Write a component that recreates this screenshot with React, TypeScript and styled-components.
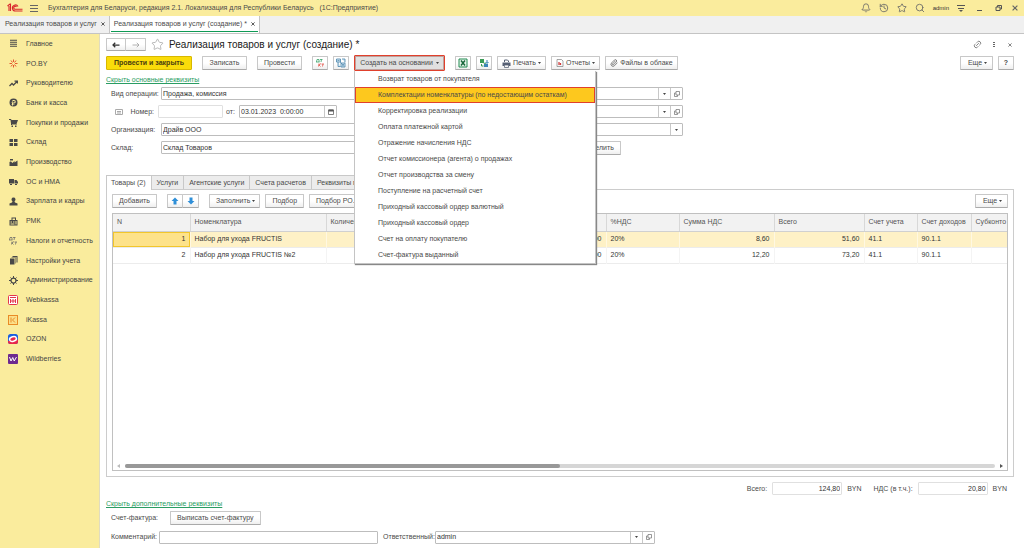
import React from "react";
import styled, { createGlobalStyle, css } from "styled-components";
import { Bell, History, Link2, Paperclip, Search, Star } from "lucide-react";

const GlobalStyle = createGlobalStyle`
  * { box-sizing: border-box; }
  body {
    margin: 0;
    background: #fff;
    color: #4a4a4a;
    font: 7px/10px "Liberation Sans", Arial, sans-serif;
  }
  button, input { font: inherit; color: inherit; margin: 0; }
  svg { display: block; flex: none; }
`;

/* ---------- shell ---------- */

const Shell = styled.div`
  display: flex;
  flex-direction: column;
  min-height: 100vh;
`;

const TitleBar = styled.header`
  display: flex;
  align-items: center;
  height: 16px;
  padding: 0 5px 0 7px;
  background: #faec9d;
`;

const AppTitle = styled.span`
  margin-left: 5px;
  white-space: pre;
`;

const Spacer = styled.div`
  flex: 1;
`;

const SystemTools = styled.div`
  display: flex;
  align-items: center;
  gap: 8px;
`;

const UserName = styled.span`
  font-size: 6px;
  color: #333;
`;

const IconButton = styled.button`
  display: flex;
  align-items: center;
  justify-content: center;
  min-width: 8px;
  padding: 0;
  border: 0;
  background: none;
  color: #666;
`;

const TabClose = styled(IconButton)`
  min-width: 4px;
  color: #333;
`;

const WindowTabs = styled.nav`
  display: flex;
  height: 18px;
  background: #f0f0f0;
  border-bottom: 1px solid #c4c4c4;
`;

const WindowTab = styled.div<{ $active?: boolean }>`
  display: flex;
  padding: 0 4px 0 5px;
  border-right: 1px solid #c4c4c4;
  ${(p) =>
    p.$active &&
    css`
      padding: 0 1px;
      background: #fff;
    `}
`;

const TabInner = styled.div<{ $active?: boolean }>`
  display: flex;
  align-items: center;
  gap: 4px;
  height: 16px;
  padding: ${(p) => (p.$active ? "0 3px" : "0")};
  border-bottom: 1px solid ${(p) => (p.$active ? "#0f9a55" : "transparent")};
`;

const TabLink = styled.a`
  color: inherit;
  text-decoration: none;
`;

const Body = styled.div`
  display: flex;
  flex: 1;
`;

const Sidebar = styled.nav`
  flex: none;
  width: 100px;
  background: #faec9d;
  border-right: 1px solid #e0dcc0;
`;

const SideList = styled.ul`
  display: flex;
  flex-direction: column;
  height: 335px;
  margin: 0;
  padding: 0;
  list-style: none;
`;

const SideItem = styled.li`
  display: flex;
  flex: 1;
  align-items: center;
`;

const SideLink = styled.a`
  display: grid;
  grid-template-columns: 10px auto;
  column-gap: 8px;
  align-items: center;
  justify-items: center;
  padding-left: 8px;
  color: #444;
  text-decoration: none;
  white-space: nowrap;
`;

const Main = styled.main`
  flex: 1;
  min-width: 0;
  padding: 4px 10px 4px 6px;
`;

/* ---------- shared controls ---------- */

const Button = styled.button<{ $square?: boolean }>`
  display: flex;
  align-items: center;
  justify-content: center;
  gap: 4px;
  height: 14px;
  padding: 0 ${(p) => (p.$square ? 0 : 6)}px;
  width: ${(p) => (p.$square ? "16px" : "auto")};
  border: 1px solid #c8c8c8;
  border-bottom-color: #aaa;
  border-radius: 1px;
  background: linear-gradient(#fff 50%, #efefef);
  color: #4a4a4a;
  white-space: nowrap;
`;

const WideButton = styled(Button)`
  min-width: 45px;
`;

const MenuButton = styled(Button)`
  gap: 2px;
  min-width: 33px;
  padding: 0 4px 0 6px;
`;

const IconTextButton = styled(Button)`
  gap: 2px;
  padding: 0 4px;
`;

const PrimaryButton = styled(Button)`
  width: 86px;
  border: 1px solid #d8b800;
  background: #fadc0a;
  font-weight: bold;
  color: #4a4010;
`;

const OpenButton = styled(Button)`
  width: 91px;
  height: 16px;
  gap: 3px;
  border: 1px solid #e0402c;
  background: #e0e0e0;
  box-shadow: inset 0 0 0 1px #c0a09c;
`;

const ButtonGroup = styled.div`
  display: flex;
  button + button { border-left: 0; border-radius: 0 1px 1px 0; }
`;

const NavButton = styled(Button)`
  width: 20px;
  height: 13px;
  padding: 0;
`;

const ToggleLink = styled.a`
  align-self: flex-start;
  color: #2a9d63;
  text-decoration: underline;
`;

const Label = styled.label<{ $width?: number; $right?: boolean }>`
  flex: none;
  width: ${(p) => (p.$width ? p.$width + "px" : "auto")};
  text-align: ${(p) => (p.$right ? "right" : "left")};
  padding-right: ${(p) => (p.$right ? 4 : 0)}px;
`;

const FieldBox = styled.div<{ $width?: number; $pale?: boolean }>`
  display: flex;
  flex: none;
  width: ${(p) => p.$width ?? 100}px;
  height: 13px;
  border: 1px solid ${(p) => (p.$pale ? "#e0e0e0" : "#bdbdbd")};
  border-radius: 1px;
  background: #fff;
`;

const FieldInput = styled.input<{ $right?: boolean }>`
  flex: 1;
  min-width: 0;
  padding: 0 1px;
  border: 0;
  outline: 0;
  background: none;
  color: #333;
  text-align: ${(p) => (p.$right ? "right" : "left")};
`;

const FieldButton = styled.button`
  display: flex;
  align-items: center;
  justify-content: center;
  width: 12px;
  padding: 0;
  border: 0;
  border-left: 1px solid #c8c8c8;
  background: none;
  color: #555;
`;

/* ---------- document header ---------- */

const DocHeader = styled.div`
  display: flex;
  align-items: center;
  height: 13px;
`;

const DocTitle = styled.h1`
  margin: 0 0 0 5px;
  font-size: 10px;
  line-height: 13px;
  font-weight: normal;
  color: #1a1a1a;
`;

const StarSlot = styled(IconButton)`
  margin-left: 5px;
  color: #aaa;
`;

const HeaderTools = styled.div`
  display: flex;
  align-items: center;
  gap: 8px;
`;

const Toolbar = styled.div<{ $gap?: number }>`
  display: flex;
  align-items: center;
  gap: ${(p) => p.$gap ?? 5}px;
`;

const CommandBar = styled(Toolbar)`
  height: 16px;
  margin: 4px 0;
`;

const CommandGroup = styled(Toolbar)`
  margin-right: 5px;
`;

const MenuAnchor = styled.div`
  position: relative;
  margin-right: 5px;
`;

const Menu = styled.ul`
  position: absolute;
  z-index: 2;
  top: 100%;
  left: 0;
  width: 242px;
  margin: 0;
  padding: 0;
  list-style: none;
  background: #fff;
  border: 1px solid #c4c4c4;
  border-top: 0;
  box-shadow: 1px 1px 1px #888;
`;

const MenuItem = styled.button<{ $selected?: boolean }>`
  display: block;
  width: 100%;
  height: 16px;
  padding: 0 0 0 22px;
  border: 1px solid ${(p) => (p.$selected ? "#e0402c" : "transparent")};
  background: ${(p) => (p.$selected ? "#fdc81e" : "none")};
  text-align: left;
`;

/* ---------- form ---------- */

const FormGrid = styled.div`
  display: grid;
  grid-template-columns: 284px 282px;
  column-gap: 6px;
  row-gap: 5px;
  padding: 0 0 0 5px;
  margin-top: 2px;
`;

const FormRow = styled.div`
  display: flex;
  align-items: center;
  height: 13px;
`;

const NumberMark = styled.span`
  display: flex;
  width: 17px;
  padding-left: 4px;
`;

const SplitSlot = styled(FormRow)`
  padding-left: 160px;
`;

/* ---------- tab panel ---------- */

const TabStrip = styled.div`
  display: flex;
  margin-top: 21px;
  height: 14px;
`;

const DocTab = styled.button<{ $active?: boolean }>`
  height: ${(p) => (p.$active ? 15 : 14)}px;
  padding: 0 5px 0 ${(p) => (p.$active ? 4 : 5)}px;
  border: 1px solid #c8c8c8;
  border-bottom: 0;
  border-left-width: ${(p) => (p.$active ? 1 : 0)}px;
  background: ${(p) => (p.$active ? "#fff" : "#ececec")};
  position: relative;
  white-space: nowrap;
`;

const Panel = styled.section`
  padding: 4px 5px 5px;
  border: 1px solid #ccc;
`;

const GridFrame = styled.div`
  display: flex;
  flex-direction: column;
  height: 258px;
  margin-top: 5px;
  border: 1px solid #c0c0c0;
`;

const DataTable = styled.table`
  width: 100%;
  table-layout: fixed;
  border-collapse: collapse;
`;

const HeadCell = styled.th`
  height: 17px;
  padding: 0 4px;
  border-right: 1px solid #d8d8d8;
  border-bottom: 1px solid #d0d0d0;
  background: #f2f2f2;
  font-weight: normal;
  text-align: left;
  white-space: nowrap;
  color: #555;
  &:last-child { border-right: 0; }
`;

const Cell = styled.td<{ $num?: boolean; $current?: boolean }>`
  height: 16px;
  padding: 0 4px;
  text-align: ${(p) => (p.$num ? "right" : "left")};
  white-space: nowrap;
  color: #333;
  ${(p) =>
    p.$current &&
    css`
      background: #fde28a;
      box-shadow: inset 0 0 0 1px #f2c62c;
    `}
`;

const Row = styled.tr<{ $selected?: boolean }>`
  background: ${(p) => (p.$selected ? "#fef1c6" : "#fff")};
  border-bottom: 1px solid #ececec;
  ${Cell} + ${Cell} {
    border-left: 1px solid ${(p) => (p.$selected ? "#fff8e2" : "#f4f4f4")};
  }
`;

const ScrollBar = styled.div`
  display: flex;
  align-items: center;
  gap: 5px;
  height: 8px;
  padding: 0 4px;
  color: #777;
`;

const ScrollTrack = styled.div`
  flex: 1;
  height: 4px;
  border-radius: 2px;
  background: #d6d6d6;
`;

const ScrollThumb = styled.div`
  width: 50%;
  height: 4px;
  border-radius: 2px;
  background: #989898;
`;

/* ---------- footer ---------- */

const Totals = styled.div`
  display: flex;
  align-items: center;
  justify-content: flex-end;
  gap: 5px;
  margin-top: 5px;
  padding-right: 7px;
`;

const Currency = styled.span`
  margin-right: 7px;
  &:last-child { margin-right: 0; }
`;

const Footer = styled.div`
  display: flex;
  flex-direction: column;
  margin-top: 4px;
`;

const FooterRow = styled.div`
  display: flex;
  align-items: center;
  height: 14px;
  margin-top: 2px;
  padding-left: 5px;
`;

const CommentRow = styled(FooterRow)`
  margin-top: 5px;
`;

const ResponsibleLabel = styled(Label)`
  margin-left: 5px;
`;

/* ---------- icons ---------- */

const Svg = ({ w = 9, box = 18, children }: { w?: number; box?: number; children: React.ReactNode }) => (
  <svg width={w} height={w} viewBox={`0 0 ${box} ${box}`} fill="none" stroke="currentColor" strokeWidth="2" aria-hidden="true">
    {children}
  </svg>
);

const Caret = () => (
  <svg width="3" height="2" viewBox="0 0 6 4" aria-hidden="true"><path d="M0 0h6L3 4z" fill="#444" /></svg>
);

const Logo = () => (
  <svg width="16" height="10" viewBox="0 0 32 20" fill="none" stroke="#d8262c" strokeWidth="2.2" aria-hidden="true">
    <path d="M1 6l5-4h1v14M4 6v10" />
    <path d="M22 7a6 6 0 1 0-5 9h14M19 8a3 3 0 1 0-2 4.500h14" />
  </svg>
);

const CloseMark = ({ size = 5 }: { size?: number }) => (
  <svg width={size} height={size} viewBox="0 0 10 10" stroke="currentColor" strokeWidth="2" aria-hidden="true"><path d="M1 1l8 8M9 1l-8 8" /></svg>
);

const OpenMark = () => (
  <svg width="6" height="6" viewBox="0 0 12 12" fill="none" stroke="#777" strokeWidth="1.5" aria-hidden="true">
    <path d="M4 1h7v7H4zM4 4H1v7h6V8" />
  </svg>
);

const DtKt = ({ color }: { color?: boolean }) => (
  <Svg w={10} box={20}>
    <g strokeWidth="1.5">
      <g stroke={color ? "#2f9e60" : "#666"}><path d="M3 8l1-5h4v5M2 8h7M10 3h5M13 3l-1 5" /></g>
      <g stroke={color ? "#e0483c" : "#666"}><path d="M8 11l-1 6M12 11l-4 3 3 3M13 12h5M16 12l-1 5" /></g>
    </g>
  </Svg>
);

const Structure = () => (
  <Svg w={10} box={20}>
    <path d="M1 2h8v6H1zM12 2h6v7M4 8v9h5M10 10h8v8h-8z" fill="#d6e8f2" stroke="#4683ab" strokeWidth="1.6" />
    <path d="M3 5h4M12 13h4M12 15.500h4M8 8l4 4" stroke="#4683ab" strokeWidth="1.4" />
  </Svg>
);

const Excel = () => (
  <Svg w={10} box={20}>
    <path d="M2 2h16v16H2z" stroke="#218a50" fill="#eaf6ee" />
    <path d="M6 5l8 10M14 5l-8 10" stroke="#17663a" strokeWidth="3" />
  </Svg>
);

const Exchange = () => (
  <Svg w={10} box={20}>
    <path d="M2 2h8v8H2z" fill="#3b9c56" stroke="none" />
    <path d="M6 8l8 4M5 12v4h4" stroke="#3b9c56" />
    <path d="M16 4v6M13 8l3 3 3-3" stroke="#2c7fae" />
    <path d="M10 12h8v6h-8z" fill="#3b86b8" stroke="none" />
  </Svg>
);

const Printer = () => (
  <Svg w={9}>
    <path d="M5 6V2h6l2 2v2" stroke="#566074" />
    <path d="M1 7h16v7h-3v-2H4v2H1z" fill="#566074" stroke="none" />
    <path d="M5 12h8v5H5z" stroke="#566074" strokeWidth="1.5" />
  </Svg>
);

const Report = () => (
  <Svg w={8} box={16}>
    <path d="M2 1h9l3 3v11H2z" stroke="#888" strokeWidth="1.5" />
    <path d="M6 6v6M9 8v4" stroke="#d03a3a" strokeWidth="2.5" />
  </Svg>
);

const Calendar = () => (
  <Svg w={6} box={12}>
    <path d="M1 2h10v9H1z" stroke="#555" strokeWidth="1.5" />
    <path d="M1 1h10v4H1z" fill="#555" stroke="none" />
  </Svg>
);

const ArrowMark = ({ left }: { left?: boolean }) => (
  <svg width="8" height="6" viewBox="0 0 16 12" fill="none" stroke={left ? "#333" : "#999"} strokeWidth={left ? 2.5 : 1.5} aria-hidden="true">
    <path d={left ? "M15 6H2M6.500 1.500L2 6l4.500 4.500" : "M1 6h13M9.500 1.500L14 6l-4.500 4.500"} />
  </svg>
);

const MoveMark = ({ down }: { down?: boolean }) => (
  <svg width="8" height="8" viewBox="0 0 16 16" fill="#2f8fd8" aria-hidden="true">
    <path d={down ? "M5 1h6v7h4l-7 7-7-7h4z" : "M5 15h6V8h4L8 1 1 8h4z"} />
  </svg>
);

const Filled = ({ d }: { d: string }) => (
  <Svg><path d={d} fill="#484848" stroke="none" fillRule="evenodd" /></Svg>
);

const sections: { label: string; icon: React.ReactNode }[] = [
  { label: "Главное", icon: <Svg><path d="M2 2.500h14M2 6.500h14M2 10.500h14M2 14.500h14" stroke="#484848" /></Svg> },
  {
    label: "PO.BY",
    icon: <Svg><path d="M9 1v5M9 12v5M1 9h5M12 9h5M4 3l3 4M14 3l-3 4M4 15l3-4M14 15l-3-4" stroke="#e4572e" /></Svg>,
  },
  { label: "Руководителю", icon: <Svg><path d="M1 14l5-5 3 3 7-7M11 4h6v5" stroke="#484848" strokeWidth="2.5" /></Svg> },
  { label: "Банк и касса", icon: <Filled d="M9 1a8 8 0 1 0 0 16A8 8 0 0 0 9 1zM7 4h3a3 3 0 0 1 0 7H8v1h3v1H8v2H6v-2H5v-1h1v-2H5V9h2zm1 2v3h2a1.500 1.500 0 0 0 0-3z" /> },
  { label: "Покупки и продажи", icon: <Filled d="M0 2h4l1 2h13l-3 8H6v1h10v1H4v-3L3 4H0zM5 15h3v3H5zM12 15h3v3h-3z" /> },
  { label: "Склад", icon: <Filled d="M1 2h7v6H1zM10 2h7v6h-7zM1 10h7v6H1zM10 10h7v6h-7z" /> },
  { label: "Производство", icon: <Filled d="M1 16V8l2-1h1l3 3 4-4v3l6-4v11zM2 2h6v3H2z" /> },
  { label: "ОС и НМА", icon: <Filled d="M0 4h10v9H0zM11 6h4l3 4v3h-7zM2 12h4v4H2zM12 12h4v4h-4z" /> },
  { label: "Зарплата и кадры", icon: <Filled d="M9 1a4 4 0 0 1 2 7.500L12 11l5 2v4H1v-4l5-2 1-2.500A4 4 0 0 1 9 1z" /> },
  { label: "РМК", icon: <Filled d="M5 1h9v5h3v11H1V6h4zM7 3v3h5V3zM3 9v2h3V9zM8 9v2h3V9zM3 13v2h8v-2zM13 8v7h2V8z" /> },
  { label: "Налоги и отчетность", icon: <DtKt /> },
  { label: "Настройки учета", icon: <Filled d="M2 5h9v12H2zM5 2h9v1H5zM12 4h1v11h-1zM7 0h10v13h-2V2H7z" /> },
  {
    label: "Администрирование",
    icon: (
      <Svg>
        <circle cx="9" cy="9" r="5" stroke="#484848" strokeWidth="2.5" />
        <path d="M9 0v4M9 14v4M0 9h4M14 9h4M3 3l2 2M13 13l2 2M15 3l-2 2M5 13l-2 2" stroke="#484848" />
      </Svg>
    ),
  },
  {
    label: "Webkassa",
    icon: (
      <Svg w={10} box={20}>
        <rect x="1" y="1" width="18" height="18" rx="2" fill="#fff" stroke="#e2354c" />
        <path d="M4 5h12M5 8v8M10 8v8M15 8v8M4 12h12" stroke="#e2354c" />
      </Svg>
    ),
  },
  {
    label: "iKassa",
    icon: (
      <Svg w={10} box={20}>
        <rect x="1" y="1" width="18" height="18" fill="#fbe08a" stroke="#e98b25" />
        <path d="M6 5v10M14 5l-5 5 5 5" stroke="#e98b25" />
      </Svg>
    ),
  },
  {
    label: "OZON",
    icon: (
      <Svg w={10} box={20}>
        <rect width="20" height="20" rx="5" fill="#1b5fe0" stroke="none" />
        <path d="M0 14l20-3v5a4 4 0 0 1-4 4H4a4 4 0 0 1-4-4z" fill="#e8274b" stroke="none" />
        <ellipse cx="10" cy="10" rx="7" ry="4.500" fill="#e8274b" stroke="#fff" strokeWidth="3" transform="rotate(-15 10 10)" />
      </Svg>
    ),
  },
  {
    label: "Wildberries",
    icon: (
      <Svg w={10} box={20}>
        <rect width="20" height="20" rx="2" fill="#6d2a90" stroke="none" />
        <path d="M3 6l3 8 3.500-7 3 7L17 6" stroke="#fff" />
      </Svg>
    ),
  },
];

const menuItems = [
  "Возврат товаров от покупателя",
  "Комплектации номенклатуры (по недостающим остаткам)",
  "Корректировка реализации",
  "Оплата платежной картой",
  "Отражение начисления НДС",
  "Отчет комиссионера (агента) о продажах",
  "Отчет производства за смену",
  "Поступление на расчетный счет",
  "Приходный кассовый ордер валютный",
  "Приходный кассовый ордер",
  "Счет на оплату покупателю",
  "Счет-фактура выданный",
];

const columns: { title: string; width?: number; num?: boolean }[] = [
  { title: "N", width: 77, num: true },
  { title: "Номенклатура" },
  { title: "Количество", width: 190, num: true },
  { title: "Сумма", width: 90, num: true },
  { title: "%НДС", width: 73 },
  { title: "Сумма НДС", width: 95, num: true },
  { title: "Всего", width: 90, num: true },
  { title: "Счет учета", width: 53 },
  { title: "Счет доходов", width: 54 },
  { title: "Субконто", width: 36 },
];

const goods = [
  ["1", "Набор для ухода FRUCTIS", "", "43,00", "20%", "8,60", "51,60", "41.1", "90.1.1", ""],
  ["2", "Набор для ухода FRUCTIS №2", "", "61,00", "20%", "12,20", "73,20", "41.1", "90.1.1", ""],
];

interface FieldProps {
  id: string;
  value?: string;
  width: number;
  pale?: boolean;
  right?: boolean;
  drop?: boolean;
  open?: boolean;
  label?: string;
}

const Field = ({ id, value = "", width, pale, right, drop, open, label }: FieldProps) => (
  <FieldBox $width={width} $pale={pale}>
    <FieldInput id={id} defaultValue={value} $right={right} aria-label={label} />
    {drop && <FieldButton aria-label="Выбрать"><Caret /></FieldButton>}
    {open && <FieldButton aria-label="Открыть"><OpenMark /></FieldButton>}
  </FieldBox>
);

export default function App() {
  return (
    <Shell>
      <GlobalStyle />
      <TitleBar>
        <Logo />
        <IconButton aria-label="Меню">
          <svg width="20" height="8" viewBox="0 0 20 8" stroke="#666" aria-hidden="true"><path d="M7 1.500h8M7 4.500h8M7 7.500h8" /></svg>
        </IconButton>
        <AppTitle>{"Бухгалтерия для Беларуси, редакция 2.1. Локализация для Республики Беларусь   (1С:Предприятие)"}</AppTitle>
        <Spacer />
        <SystemTools>
          <IconButton aria-label="Уведомления"><Bell size={10} /></IconButton>
          <IconButton aria-label="История"><History size={10} /></IconButton>
          <IconButton aria-label="Избранное"><Star size={10} /></IconButton>
          <IconButton aria-label="Поиск"><Search size={10} /></IconButton>
          <UserName>admin</UserName>
          <IconButton aria-label="Настройки">
            <svg width="8" height="8" viewBox="0 0 8 8" aria-hidden="true"><path d="M0 1.500h8M1 4.500h6" stroke="#555" /><path d="M2 6h4L4 8z" fill="#555" /></svg>
          </IconButton>
        </SystemTools>
        <SystemTools>
          <IconButton aria-label="Свернуть"><svg width="22" height="8" viewBox="0 0 22 8" stroke="#555" aria-hidden="true"><path d="M12 6.500h5" /></svg></IconButton>
          <IconButton aria-label="Развернуть"><svg width="8" height="8" viewBox="0 0 16 16" fill="none" stroke="#555" strokeWidth="2" aria-hidden="true"><path d="M2 6h8v7H2zM5 6V3h8v7h-3" /></svg></IconButton>
          <IconButton aria-label="Закрыть"><CloseMark size={6} /></IconButton>
        </SystemTools>
      </TitleBar>

      <WindowTabs>
        <WindowTab>
          <TabInner>
            <TabLink href="#list">Реализация товаров и услуг</TabLink>
            <TabClose aria-label="Закрыть вкладку"><CloseMark size={4} /></TabClose>
          </TabInner>
        </WindowTab>
        <WindowTab $active>
          <TabInner $active>
            <TabLink href="#new">Реализация товаров и услуг (создание) *</TabLink>
            <TabClose aria-label="Закрыть вкладку"><CloseMark size={4} /></TabClose>
          </TabInner>
        </WindowTab>
      </WindowTabs>

      <Body>
        <Sidebar>
          <SideList>
            {sections.map((s) => (
              <SideItem key={s.label}>
                <SideLink href="#section">{s.icon}<span>{s.label}</span></SideLink>
              </SideItem>
            ))}
          </SideList>
        </Sidebar>

        <Main>
          <DocHeader>
            <ButtonGroup>
              <NavButton aria-label="Назад"><ArrowMark left /></NavButton>
              <NavButton aria-label="Вперед"><ArrowMark /></NavButton>
            </ButtonGroup>
            <StarSlot aria-label="В избранное"><Star size={13} strokeWidth={1.5} /></StarSlot>
            <DocTitle>Реализация товаров и услуг (создание) *</DocTitle>
            <Spacer />
            <HeaderTools>
              <IconButton aria-label="Ссылка"><Link2 size={9} transform="rotate(-45)" /></IconButton>
              <IconButton aria-label="Действия"><svg width="2" height="6" viewBox="0 0 2 6" fill="#666" aria-hidden="true"><path d="M0 0h2v1H0zM0 2h2v1H0zM0 4h2v1H0z" /></svg></IconButton>
              <IconButton aria-label="Закрыть форму"><CloseMark size={4} /></IconButton>
            </HeaderTools>
          </DocHeader>

          <CommandBar>
            <CommandGroup $gap={10}>
              <PrimaryButton>Провести и закрыть</PrimaryButton>
              <WideButton>Записать</WideButton>
              <WideButton>Провести</WideButton>
            </CommandGroup>
            <Button $square aria-label="Проводки"><DtKt color /></Button>
            <Button $square aria-label="Структура"><Structure /></Button>
            <MenuAnchor>
              <OpenButton aria-expanded="true">Создать на основании <Caret /></OpenButton>
              <Menu>
                {menuItems.map((m, i) => (
                  <li key={m}><MenuItem $selected={i === 1}>{m}</MenuItem></li>
                ))}
              </Menu>
            </MenuAnchor>
            <Button $square aria-label="Excel"><Excel /></Button>
            <Button $square aria-label="Обмен"><Exchange /></Button>
            <IconTextButton><Printer />Печать <Caret /></IconTextButton>
            <IconTextButton><Report />Отчеты <Caret /></IconTextButton>
            <IconTextButton><Paperclip size={8} />Файлы в облаке</IconTextButton>
            <Spacer />
            <MenuButton>Еще <Caret /></MenuButton>
            <Button $square aria-label="Справка"><b>?</b></Button>
          </CommandBar>

          <ToggleLink href="#main-details">Скрыть основные реквизиты</ToggleLink>

          <FormGrid>
            <FormRow>
              <Label htmlFor="operation" $width={50}>Вид операции:</Label>
              <Field id="operation" value="Продажа, комиссия" width={234} />
            </FormRow>
            <FormRow><Field id="partner" label="Контрагент" width={282} drop open /></FormRow>
            <FormRow>
              <NumberMark><svg width="8" height="6" viewBox="0 0 8 6" fill="none" stroke="#aaa" aria-hidden="true"><path d="M.5.5h7v5h-7zM2 2.500h4M2 4h4" /></svg></NumberMark>
              <Label htmlFor="number" $width={30} $right>Номер:</Label>
              <Field id="number" width={65} pale />
              <Label htmlFor="date" $width={16} $right>от:</Label>
              <FieldBox $width={98}>
                <FieldInput id="date" defaultValue="03.01.2023  0:00:00" />
                <FieldButton aria-label="Календарь"><Calendar /></FieldButton>
              </FieldBox>
            </FormRow>
            <FormRow><Field id="contract" label="Договор" width={282} drop open /></FormRow>
            <FormRow>
              <Label htmlFor="company" $width={50}>Организация:</Label>
              <Field id="company" value="Драйв ООО" width={234} />
            </FormRow>
            <FormRow><Field id="account" label="Банковский счет" width={282} drop /></FormRow>
            <FormRow>
              <Label htmlFor="store" $width={50}>Склад:</Label>
              <Field id="store" value="Склад Товаров" width={234} />
            </FormRow>
            <SplitSlot><Button>Распределить</Button></SplitSlot>
          </FormGrid>

          <TabStrip>
            <DocTab $active>Товары (2)</DocTab>
            <DocTab>Услуги</DocTab>
            <DocTab>Агентские услуги</DocTab>
            <DocTab>Счета расчетов</DocTab>
            <DocTab>Реквизиты печати</DocTab>
          </TabStrip>
          <Panel>
            <Toolbar>
              <CommandGroup $gap={10}>
                <WideButton>Добавить</WideButton>
                <ButtonGroup>
                  <Button $square aria-label="Вверх"><MoveMark /></Button>
                  <Button $square aria-label="Вниз"><MoveMark down /></Button>
                </ButtonGroup>
              </CommandGroup>
              <MenuButton>Заполнить <Caret /></MenuButton>
              <Button>Подбор</Button>
              <Button>Подбор PO.BY</Button>
              <Spacer />
              <MenuButton>Еще <Caret /></MenuButton>
            </Toolbar>
            <GridFrame>
              <DataTable>
                <colgroup>
                  {columns.map((c) => <col key={c.title} width={c.width} />)}
                </colgroup>
                <thead>
                  <tr>{columns.map((c) => <HeadCell key={c.title}>{c.title}</HeadCell>)}</tr>
                </thead>
                <tbody>
                  {goods.map((g, r) => (
                    <Row key={g[0]} $selected={r === 0}>
                      {g.map((v, c) => (
                        <Cell key={columns[c].title} $num={columns[c].num} $current={r === 0 && c === 0}>{v}</Cell>
                      ))}
                    </Row>
                  ))}
                </tbody>
              </DataTable>
              <Spacer />
              <ScrollBar>
                <svg width="3" height="4" viewBox="0 0 3 4" fill="#bbb" aria-hidden="true"><path d="M3 0v4L0 2z" /></svg>
                <ScrollTrack><ScrollThumb /></ScrollTrack>
                <svg width="3" height="4" viewBox="0 0 3 4" fill="#555" aria-hidden="true"><path d="M0 0v4l3-2z" /></svg>
              </ScrollBar>
            </GridFrame>
          </Panel>

          <Totals>
            <Label htmlFor="total">Всего:</Label>
            <Field id="total" value="124,80" width={70} pale right />
            <Currency>BYN</Currency>
            <Label htmlFor="vat">НДС (в т.ч.):</Label>
            <Field id="vat" value="20,80" width={70} pale right />
            <Currency>BYN</Currency>
          </Totals>

          <Footer>
            <ToggleLink href="#extra-details">Скрыть дополнительные реквизиты</ToggleLink>
            <FooterRow>
              <Label as="span" $width={59}>Счет-фактура:</Label>
              <Button>Выписать счет-фактуру</Button>
            </FooterRow>
            <CommentRow>
              <Label htmlFor="comment" $width={48}>Комментарий:</Label>
              <Field id="comment" width={219} />
              <ResponsibleLabel htmlFor="owner" $width={52}>Ответственный:</ResponsibleLabel>
              <Field id="owner" value="admin" width={220} drop open />
            </CommentRow>
          </Footer>
        </Main>
      </Body>
    </Shell>
  );
}
